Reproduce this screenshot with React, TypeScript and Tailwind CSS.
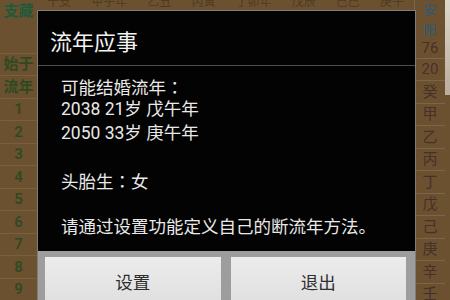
import React from 'react';

const font = { fontFamily: '"Roboto", "Noto Sans CJK SC", sans-serif' };

const leftRows = ['始于', '流年', '1', '2', '3', '4', '5', '6', '7', '8', '9'];
const rightRows = ['20', '癸', '甲', '乙', '丙', '丁', '戊', '己', '庚', '辛', '壬'];
const headerBits = ['干支', '甲子年', '乙丑', '丙寅', '丁卯年', '戊辰', '己巳', '庚午'];

// colon is rendered centred in its cell, like the device font
const Colon = () => <span style={{ fontFamily: '"Noto Sans CJK JP", sans-serif' }}>：</span>;

const bodyLines: React.ReactNode[] = [
  <>可能结婚流年<Colon /></>,
  '2038 21岁 戊午年',
  '2050 33岁 庚午年',
  '',
  <>头胎生<Colon />女</>,
  '',
  '请通过设置功能定义自己的断流年方法。',
];

export default function App() {
  return (
    <div className="relative w-[450px] h-[300px] overflow-hidden bg-[#6c5130]" style={font}>
      {/* Dimmed table behind the dialog */}
      <div className="flex h-full">
        <div className="w-[37px] flex flex-col text-[#2e4a22] text-[15px] font-semibold">
          <div className="h-[24px] flex items-center justify-center text-[#1f5a3a]">支藏</div>
          <div className="h-[34px]" />
          {leftRows.map((t, i) => (
            <div key={i} className="h-[22.5px] flex items-center justify-center border-t border-[#7a5f3c]">
              {t}
            </div>
          ))}
        </div>

        <div className="flex-1 flex flex-col">
          <div className="h-[10px] overflow-hidden flex justify-around text-[12px] text-[#4e3b22]">
            {headerBits.map((t, i) => (
              <span key={i} className="-mt-[7px]">{t}</span>
            ))}
          </div>
        </div>

        <div className="w-[31px] flex flex-col text-[#46302a] text-[15px] border-l border-[#7d6647]">
          <div className="h-[20px] flex items-center justify-center text-[#2a5a7a] text-[13px]">安</div>
          <div className="h-[20px] flex items-center justify-center text-[#2a5a7a] text-[13px]">阳</div>
          <div className="h-[18.5px] flex items-center justify-center">76</div>
          {rightRows.map((t, i) => (
            <div key={i} className="h-[22.5px] flex items-center justify-center border-t border-[#7d6647]">
              {t}
            </div>
          ))}
        </div>
        <div className="w-[5px] flex flex-col">
          <div className="h-[95px] bg-gradient-to-b from-[#ddd6cb] to-[#b9ad9c]" />
        </div>
      </div>

      {/* Dialog */}
      <div className="absolute left-[37px] top-[10px] w-[379px] h-[300px] flex flex-col bg-[#030303] border border-[#7e7e7e]">
        <div className="h-[56px] flex items-center pl-[12px] pt-[9px] text-[22px] text-[#f2f2f2] border-b border-[#4d4d4d]">
          流年应事
        </div>
        <div className="h-[190px] pt-[9px] pl-[23px] text-[17.5px] leading-[23.5px] text-[#e9e9e9]">
          {bodyLines.map((l, i) => (
            <div key={i} className="h-[23.5px] whitespace-nowrap">{l}</div>
          ))}
        </div>
        <div className="flex-1 bg-[#9d9d9d] flex gap-[10px] pl-[7px] pr-[9px] pt-[6px]">
          <div className="flex-1 h-[52px] bg-gradient-to-b from-[#ececec] to-[#dedede] flex items-center justify-center text-[17.5px] text-[#2e2e2e]">
            设置
          </div>
          <div className="flex-1 h-[52px] bg-gradient-to-b from-[#ececec] to-[#dedede] flex items-center justify-center text-[17.5px] text-[#2e2e2e]">
            退出
          </div>
        </div>
      </div>
    </div>
  );
}
